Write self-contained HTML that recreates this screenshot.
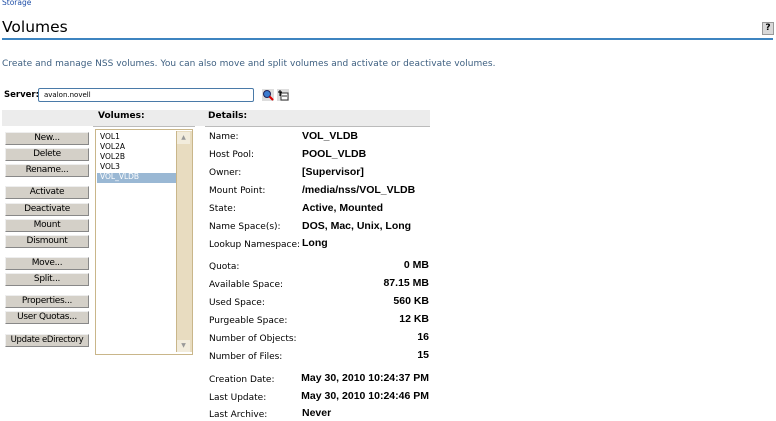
<!DOCTYPE html>
<html><head><style>
body{margin:0;width:776px;height:421px;background:#fff;position:relative;font-family:"DejaVu Sans","Liberation Sans",sans-serif;overflow:hidden}
.a{position:absolute;white-space:nowrap}
.btn{position:absolute;left:5px;width:82px;height:11px;background:#d4d0c8;border-top:1px solid #eee;border-left:1px solid #eee;border-bottom:1px solid #888;border-right:1px solid #888;font-size:9px;line-height:11px;text-align:center;color:#000;font-family:"DejaVu Sans",sans-serif;white-space:nowrap;overflow:hidden;letter-spacing:-0.3px}
.l{position:absolute;left:209px;font-size:9px;color:#000;white-space:nowrap}
.v{position:absolute;left:302px;font-size:10.5px;font-weight:bold;color:#000;font-family:"Liberation Sans",sans-serif;white-space:nowrap}
.r{position:absolute;right:347px;font-size:10.5px;font-weight:bold;color:#000;font-family:"Liberation Sans",sans-serif;white-space:nowrap}
.it{position:absolute;left:100px;font-size:7.5px;color:#000}
</style></head><body>
<div class="a" style="left:2px;top:-2px;font-size:7.5px;color:#1f4fa8">Storage</div>
<div class="a" style="left:2px;top:18px;font-size:15.5px;color:#000">Volumes</div>
<div class="a" style="left:762px;top:22px;width:10px;height:11px;background:#d8d8d8;border:1px solid #999;font-size:9px;line-height:11px;text-align:center;font-weight:bold">?</div>
<div class="a" style="left:2px;top:38px;width:771px;height:2px;background:#3d84c0"></div>
<div class="a" style="left:2px;top:59px;font-size:9px;letter-spacing:0.05px;color:#3d5f80">Create and manage NSS volumes. You can also move and split volumes and activate or deactivate volumes.</div>
<div class="a" style="left:4px;top:90px;font-size:8.5px;font-weight:bold">Server:</div>
<div class="a" style="left:38px;top:88px;width:209px;height:12px;border:1px solid #4a7aa8;border-radius:2px;font-size:7px;line-height:12px;padding-left:5px">avalon.novell</div>
<svg class="a" style="left:262px;top:89px" width="12" height="12"><rect width="12" height="12" fill="#ddd"/><circle cx="5" cy="5" r="3.5" fill="#3a7bd0" stroke="#225" stroke-width="1"/><line x1="7.5" y1="7.5" x2="11" y2="11" stroke="#d00" stroke-width="2"/></svg>
<svg class="a" style="left:277px;top:89px" width="12" height="12"><rect width="12" height="12" fill="#ddd"/><rect x="4" y="4" width="7" height="7" fill="#fff" stroke="#333"/><line x1="5" y1="7" x2="10" y2="7" stroke="#333"/><path d="M3 1v6M1 3h4" stroke="#000"/></svg>
<div class="a" style="left:2px;top:110px;width:428px;height:16px;background:#ececec"></div>
<div class="a" style="left:98px;top:111px;font-size:9px;font-weight:bold">Volumes:</div>
<div class="a" style="left:208px;top:111px;font-size:9px;font-weight:bold">Details:</div>
<div class="a" style="left:93px;top:126px;width:102px;height:1px;background:#bbb"></div>
<div class="a" style="left:205px;top:126px;width:225px;height:1px;background:#bbb"></div>
<div class="btn" style="top:132px">New...</div>
<div class="btn" style="top:148px">Delete</div>
<div class="btn" style="top:164px">Rename...</div>
<div class="btn" style="top:186px">Activate</div>
<div class="btn" style="top:203px">Deactivate</div>
<div class="btn" style="top:219px">Mount</div>
<div class="btn" style="top:235px">Dismount</div>
<div class="btn" style="top:257px">Move...</div>
<div class="btn" style="top:273px">Split...</div>
<div class="btn" style="top:295px">Properties...</div>
<div class="btn" style="top:311px">User Quotas...</div>
<div class="btn" style="top:334px;font-size:8.5px">Update eDirectory</div>
<div class="a" style="left:95px;top:129px;width:96px;height:224px;border:1px solid #c9b68a;background:#fff"></div>
<div class="a" style="left:176px;top:131px;width:15px;height:221px;background:#e8dcc0;border-left:1px solid #c9b68a"></div>
<div class="a" style="left:177px;top:132px;width:13px;height:12px;background:#f2ecdc;font-size:6px;text-align:center;color:#999;line-height:12px">▲</div>
<div class="a" style="left:177px;top:340px;width:13px;height:12px;background:#f2ecdc;font-size:6px;text-align:center;color:#999;line-height:12px">▼</div>
<div class="a" style="left:97px;top:173px;width:79px;height:10px;background:#9ab8d4"></div>
<div class="it" style="top:132px">VOL1</div>
<div class="it" style="top:142px">VOL2A</div>
<div class="it" style="top:152px">VOL2B</div>
<div class="it" style="top:162px">VOL3</div>
<div class="it" style="top:172px;color:#fff">VOL_VLDB</div>
<div class="l" style="top:132px">Name:</div><div class="v" style="top:130px">VOL_VLDB</div>
<div class="l" style="top:150px">Host Pool:</div><div class="v" style="top:148px">POOL_VLDB</div>
<div class="l" style="top:168px">Owner:</div><div class="v" style="top:166px">[Supervisor]</div>
<div class="l" style="top:186px">Mount Point:</div><div class="v" style="top:184px">/media/nss/VOL_VLDB</div>
<div class="l" style="top:204px">State:</div><div class="v" style="top:202px">Active, Mounted</div>
<div class="l" style="top:222px">Name Space(s):</div><div class="v" style="top:220px">DOS, Mac, Unix, Long</div>
<div class="l" style="top:240px">Lookup Namespace:</div><div class="v" style="top:237px">Long</div>
<div class="l" style="top:262px">Quota:</div><div class="r" style="top:259px">0 MB</div>
<div class="l" style="top:280px">Available Space:</div><div class="r" style="top:277px">87.15 MB</div>
<div class="l" style="top:298px">Used Space:</div><div class="r" style="top:295px">560 KB</div>
<div class="l" style="top:316px">Purgeable Space:</div><div class="r" style="top:313px">12 KB</div>
<div class="l" style="top:334px">Number of Objects:</div><div class="r" style="top:331px">16</div>
<div class="l" style="top:352px">Number of Files:</div><div class="r" style="top:349px">15</div>
<div class="l" style="top:375px">Creation Date:</div><div class="r" style="top:372px">May 30, 2010 10:24:37 PM</div>
<div class="l" style="top:393px">Last Update:</div><div class="r" style="top:390px">May 30, 2010 10:24:46 PM</div>
<div class="l" style="top:410px">Last Archive:</div><div class="v" style="top:407px">Never</div>
</body></html>
